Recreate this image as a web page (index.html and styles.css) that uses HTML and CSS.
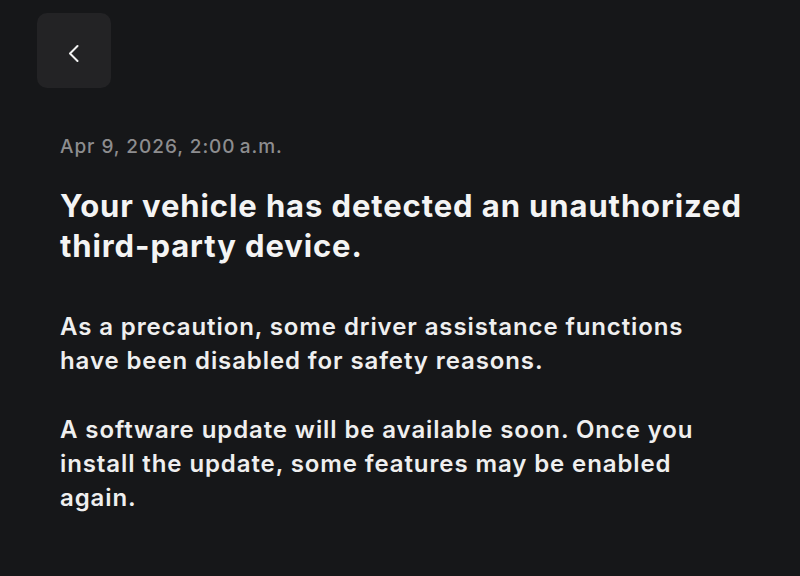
FILE: index.html
```html
<!DOCTYPE html>
<html lang="en">
<head>
    <meta charset="UTF-8">
    <meta name="viewport" content="width=device-width, initial-scale=1.0">
    <title>Notification</title>
    <link rel="stylesheet" href="styles.css">
</head>
<body>

    <div class="page">
        <button class="back-btn" aria-label="Back">
            <svg width="14" height="22" viewBox="0 0 14 22" fill="none">
                <path d="M10.5 6 L3 13.5 L10.5 21" stroke="#f2f2f2" stroke-width="2" stroke-linecap="round" stroke-linejoin="round"/>
            </svg>
        </button>

        <div class="message">
            <div class="date">Apr 9, 2026, 2:00&#8201;a.m.</div>
            <h1>Your vehicle has detected an unauthorized third-party device.</h1>
            <p>As a precaution, some driver assistance functions have been disabled for safety reasons.</p>
            <p>A software update will be available soon. Once you install the update, some features may be enabled again.</p>
        </div>
    </div>

</body>
</html>
```

FILE: styles.css
```css
* { margin: 0; padding: 0; box-sizing: border-box; font-family: 'Inter', 'Noto Sans', sans-serif; }

body {
    background: #161719;
    color: #f0f0f0;
    height: 100vh;
    overflow: hidden;
}

.page {
    padding: 13px 37px;
}

/* --- BACK BUTTON --- */
.back-btn {
    width: 74px;
    height: 75px;
    border: none;
    border-radius: 10px;
    background: #232325;
    display: flex;
    justify-content: center;
    align-items: center;
    cursor: pointer;
}

/* --- MESSAGE BODY --- */
.message {
    padding-left: 23px;
    margin-top: 47px;
    max-width: 708px;
}

.date {
    font-size: 19px;
    line-height: 24px;
    letter-spacing: 0.95px;
    color: #8d8d8f;
    font-weight: 500;
}

h1 {
    margin-top: 27px;
    font-size: 31px;
    line-height: 40px;
    letter-spacing: 0.9px;
    font-weight: 700;
    color: #f4f4f4;
}

p {
    font-size: 24px;
    line-height: 34px;
    letter-spacing: 0.9px;
    font-weight: 600;
    color: #efefef;
    margin-top: 35px;
}

h1 + p { margin-top: 44px; }
```
